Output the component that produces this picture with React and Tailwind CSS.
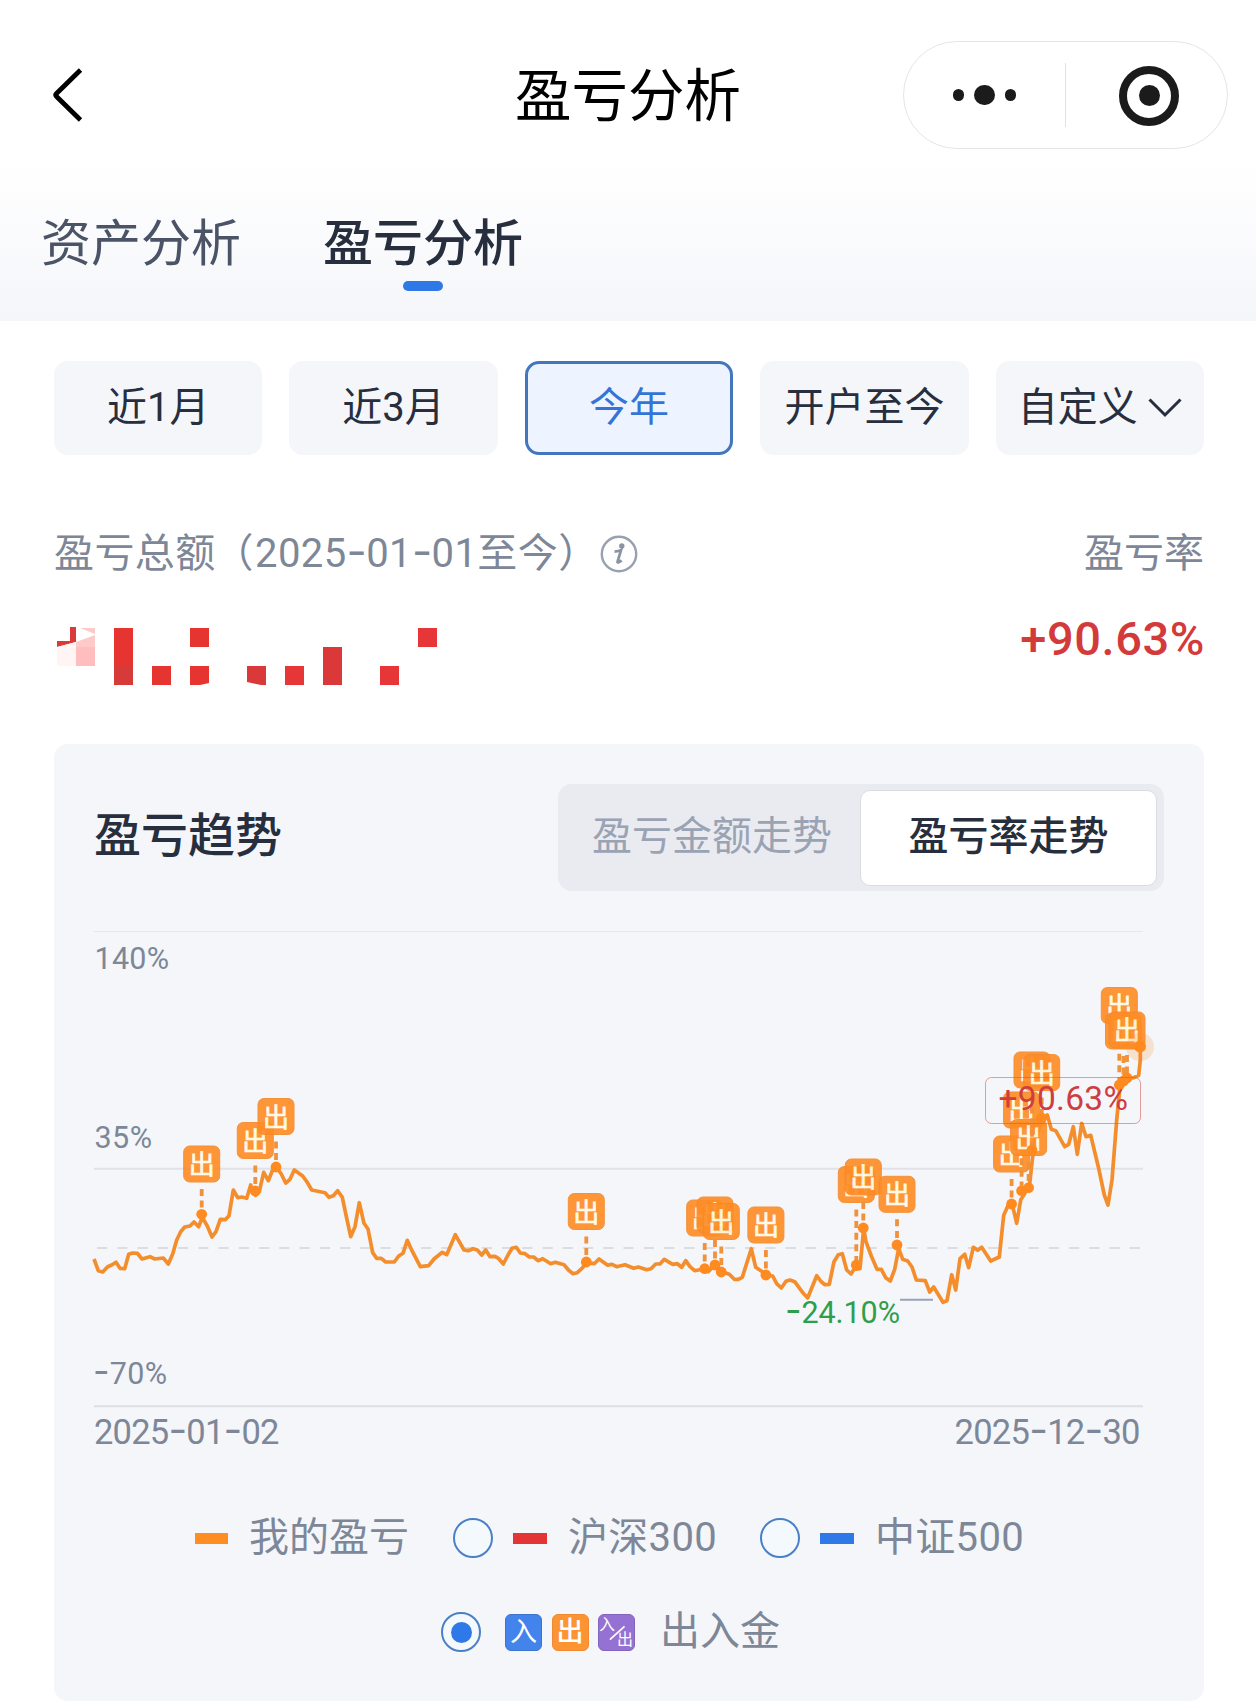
import React, { useState } from 'react'

const trend = `94,1259 98.3,1270.7 102.7,1272 107.7,1266.7 111.7,1265 116,1262.3 120,1268.3 124.7,1268.7 128.7,1254.3 132.7,1253
137.3,1253.3 142,1259 150,1256.7 154.7,1259 163.3,1258 168.3,1264 172.7,1254 176.7,1240 180.7,1231.7 184.7,1227 190,1226
194,1222 198.7,1226.7 202.3,1217.3 207.3,1226 212,1237 216,1231.7 220.3,1219.3 225.3,1219.7 229,1215.7 233.3,1190
237.7,1197.7 241.7,1197 246.7,1198.3 250.7,1185 253.3,1193.3 255.7,1195.3 259.3,1191.7 263.7,1172.3 268.3,1180.7
273.3,1168.3 276,1166.7 281.3,1174 285.7,1183 290,1179.3 294.3,1170 302.7,1176 307.3,1182.3 311.7,1190 325,1192.7
329,1197.3 333.3,1195.7 337.7,1190.7 342.3,1197.3 346,1215 350.7,1236.7 355,1226.7 359.3,1202.7 364,1223.3 368,1229
372.7,1252.7 376.7,1258.3 381.3,1258.3 385.7,1262 394.3,1262 398.7,1256 403,1253.3 407.3,1240.3 412,1250.7 420.3,1266.7
428.7,1265.7 434,1259 442.3,1252.3 446.7,1254.7 455.3,1234.7 464,1250 468.3,1250.7 473,1248.7 477.3,1250 481.7,1255
485.7,1250 490,1256.7 495,1256.3 498.3,1258.3 503.3,1264 508,1255 512,1248.3 516.3,1247.3 520.3,1253 525,1253.7
529.3,1257 533.7,1257 538,1260.7 542.7,1258.7 550.7,1263.7 555.3,1262.3 564,1264.7 568.7,1270.3 573,1273.7 577.3,1272.7
582.3,1268 586.7,1262.7 594.3,1263.7 599,1259 607.7,1265.3 612,1264.3 616.7,1266.7 625,1264.7 633.7,1268.3 638.3,1267
646.7,1269.7 651,1268.7 655.7,1264 660,1264 664.3,1259.3 672.7,1264.3 677.3,1263.7 681.7,1267.3 685.7,1260.7 690,1266.7
694.7,1270.7 703.3,1269 708.3,1271.7 714.3,1265.3 721.7,1271.7 729.3,1274.3 734.3,1279.3 738.3,1279.3 742.3,1277.3
751.3,1248.7 755.7,1267.3 761.7,1271.3 765.7,1275 772.7,1276 776.7,1283.7 781.3,1288 786,1281.3 790,1280 794.7,1281.7
803.3,1293.3 807.7,1298 816.7,1275.7 821,1281.5 825,1284.7 829.3,1284.3 834,1261.7 838.3,1254.7 842.3,1253.7 846.7,1270
851,1274 854,1269.3 860,1268.7 863.7,1228.3 866,1241.7 871.3,1256 877,1269.3 881.3,1269.3 885.7,1277.7 890.3,1281
894.7,1269.3 898.7,1248.3 902.7,1259.3 907.7,1261 912,1267 916.3,1280 925.3,1280.7 929.7,1292 933.7,1287 943,1302.3
947,1300.7 951.7,1274.7 955.7,1290 960,1258.7 964.7,1254.3 968.7,1267.7 973.3,1247.3 977.7,1250.3 981.7,1247.3
990.7,1261 999.3,1257 1003.7,1215.3 1008.3,1205 1012,1203.3 1016.7,1223.3 1020.7,1200 1026.7,1190 1029.3,1187.3
1032.3,1160 1035,1140 1041,1124 1047.3,1115 1051.3,1129.3 1055.7,1130.7 1064.7,1146.7 1068.7,1144.3 1073.3,1126.7
1077.3,1154.3 1081.7,1123.3 1086,1136.7 1090.7,1135.3 1098.3,1166.7 1104.3,1195 1108,1205 1112,1180 1116.7,1120
1120,1086 1126.7,1077.3 1133,1078 1138.7,1075.3 1140.3,1060 1140.3,1046`

// x, badge centre y, point y
const markers = [
  [201.7, 1164, 1214.3],
  [255.3, 1140.5, 1191],
  [276, 1116.5, 1167],
  [586.3, 1211.5, 1262],
  [704.7, 1218, 1268.7],
  [715, 1215, 1265],
  [721.3, 1221.5, 1272],
  [765.9, 1225, 1275],
  [856.3, 1184.5, 1265],
  [863.3, 1177, 1228],
  [897, 1194.3, 1245],
  [1011.6, 1154, 1204],
  [1021.6, 1110, 1190.7],
  [1028.6, 1137.5, 1187.7],
  [1032, 1070, 1150],
  [1041.7, 1072.5, 1118],
  [1119.3, 1005.5, 1085],
  [1123.5, 1031, 1081],
  [1127, 1030, 1078],
]

const ranges = ['近1月', '近3月', '今年', '开户至今', '自定义']

// Hyphens are drawn wider than Roboto's own
const Dashed = ({ text }) =>
  text.split('-').map((part, i) => (
    <React.Fragment key={i}>
      {i > 0 && <span className="font-[Inter] text-[44px] leading-none tracking-[-0.6px]">-</span>}
      {part}
    </React.Fragment>
  ))

const AxisText = ({ x, y, size, width, fill = '#7d8798', children }) => (
  <text x={x} y={y} fontSize={size} textLength={width} lengthAdjust="spacing" fill={fill}>
    {children}
  </text>
)

const Hyphen = () => <tspan fontFamily="Inter" fontSize="1.18em">-</tspan>

const Marker = ({ x, y, dot }) => (
  <g>
    <line x1={x} y1={y + 25} x2={x} y2={dot - 5} stroke="#f0913c" strokeWidth="3.8" strokeDasharray="7 4.6" />
    <circle cx={x} cy={dot} r="5.4" fill="#ff8a20" />
    <g opacity="0.92">
      <rect x={x - 18} y={y - 18} width="36" height="36" rx="6" fill="#ff8d26" stroke="#f28a2c" strokeWidth="1" />
      <text x={x} y={y + 10} textAnchor="middle" fontSize="26" fill="#fffbe6" stroke="#fffbe6" strokeWidth="0.7">出</text>
    </g>
  </g>
)

const TrendChart = () => (
  <svg
    viewBox="54 920 1150 550"
    className="block w-[1150px] h-[550px] font-['Roboto','Noto_Sans_CJK_SC',sans-serif]"
  >
    <line x1="94" x2="1143" y1="931.5" y2="931.5" stroke="#e5e7eb" strokeWidth="1.2" />
    <line x1="94" x2="1143" y1="1168.8" y2="1168.8" stroke="#e0e2e7" strokeWidth="2" />
    <line x1="97" x2="1141" y1="1248" y2="1248" stroke="#dcdde1" strokeWidth="2" strokeDasharray="10.2 10.05" />
    <line x1="94" x2="1143" y1="1406.3" y2="1406.3" stroke="#dddfe4" strokeWidth="2" />

    <AxisText x="94.5" y="969" size="30.5" width="74.5">140%</AxisText>
    <AxisText x="94.5" y="1148" size="30.5" width="57.5">35%</AxisText>
    <AxisText x="93" y="1384" size="30.5" width="74">
      <Hyphen />70%
    </AxisText>
    <AxisText x="94" y="1444" size="34.5" width="185.5">
      2025<Hyphen />01<Hyphen />02
    </AxisText>
    <AxisText x="954.5" y="1444" size="34.5" width="186">
      2025<Hyphen />12<Hyphen />30
    </AxisText>

    <polyline points={trend} fill="none" stroke="#f48d2c" strokeWidth="3.7" strokeLinejoin="round" />
    {markers.map(([x, y, dot], i) => (
      <Marker key={i} x={x} y={y} dot={dot} />
    ))}

    {/* lowest point */}
    <AxisText x="785" y="1322.7" size="30.5" width="115" fill="#2f9e4a">
      <Hyphen />24.10%
    </AxisText>
    <line x1="900" x2="933" y1="1299.8" y2="1299.8" stroke="#98a3b6" strokeWidth="2" />

    {/* latest point */}
    <circle cx="1140" cy="1047" r="14" fill="#ff8a20" opacity="0.2" />
    <circle cx="1140" cy="1046.5" r="6" fill="#ff8a20" />
    <rect x="985.5" y="1077.5" width="155" height="46" rx="6" fill="none" stroke="#d8504f" strokeOpacity="0.55" />
    <AxisText x="998.5" y="1109.6" size="33.5" width="129.5" fill="#cf3d3f">+90.63%</AxisText>
  </svg>
)

const MaskedAmount = () => (
  <svg viewBox="54 624 400 64" className="block w-[400px] h-[64px]">
    <path d="M57 641h13v-14h6v15l-19 5z" fill="#d93a3a" />
    <path d="M76 642l19-7v12H76zM80 628h15v6z" fill="#fdc9c9" />
    <path d="M76 647h19v19H76z" fill="#ffbdbe" />
    <path d="M57 647l19-5v24H57z" fill="#fff5f5" />
    <path d="M114 628h19v57h-19zM152 666h19v19h-19zM190 628h19v19h-19zM190 666h19v17l-9 2h-10z" fill="#e63431" />
    <path d="M285 666h19v19h-19zM380 666h19v19h-19zM418 628h19v19h-19z" fill="#e63637" />
    <path d="M247 666h19v19h-5l-14-3zM323 647h19v38h-19z" fill="#db3939" />
    <path d="M114 666h19v19h-19z" fill="#d63b39" />
  </svg>
)

const Radio = ({ checked, onClick }) => (
  <button
    onClick={onClick}
    className="size-[40px] shrink-0 rounded-full border-2 border-[#4a80c6] bg-[#f4f9fe] flex items-center justify-center"
  >
    {checked && <span className="size-[21px] rounded-full bg-[#2f78e8]" />}
  </button>
)

export default function App() {
  const [range, setRange] = useState('今年')
  const [legend, setLegend] = useState({ hs: false, zz: false, flow: true })
  const toggle = (key) => setLegend(prev => ({ ...prev, [key]: !prev[key] }))

  return (
    <div className="w-[1256px] h-[1703px] overflow-hidden bg-white text-[#272e3d] font-['Roboto','Noto_Sans_CJK_SC',sans-serif]">
      {/* Header */}
      <div className="h-[321px] bg-linear-to-b from-white from-50% to-[#f5f6fa]">
        <div className="h-[190px] pt-[41px] pl-[53px] pr-[28px] grid grid-cols-[325px_1fr_325px] items-start">
          <svg viewBox="0 0 30 54" className="w-[30px] h-[54px] mt-[27px]">
            <path d="M27.5 2L3.5 25.5Q2 27 3.5 28.5L27.5 52" fill="none" stroke="#000" strokeWidth="4.8" />
          </svg>
          <h1 className="h-[108px] flex items-center justify-center text-[56.5px] leading-none text-black -ml-[25px] pt-[5px] whitespace-nowrap">盈亏分析</h1>
          <div className="w-[325px] h-[108px] rounded-full border border-[#e5e5e5] bg-white flex items-center">
            <div className="w-[161px] flex justify-center items-center gap-[10px]">
              <span className="size-[11.5px] rounded-full bg-[#1b1b1b]" />
              <span className="size-[20.5px] rounded-full bg-[#1b1b1b]" />
              <span className="size-[11.5px] rounded-full bg-[#1b1b1b]" />
            </div>
            <div className="w-px h-[64px] bg-[#e2e2e2]" />
            <div className="flex-1 flex justify-center pl-[5px] pt-px">
              <div className="size-[60px] rounded-full border-[8px] border-[#1b1b1b] flex items-center justify-center">
                <span className="size-[21px] rounded-full bg-[#1b1b1b]" />
              </div>
            </div>
          </div>
        </div>
        <div className="pl-[41px] pt-[29px] flex gap-[82px] text-[50px] leading-[50px]">
          <button className="h-[75px] flex items-start text-[#4b5466]">资产分析</button>
          <button className="h-[75px] flex flex-col items-center font-medium">
            盈亏分析
            <span className="mt-[12px] w-[40px] h-[10px] rounded-full bg-[#2f78e8]" />
          </button>
        </div>
      </div>

      {/* Range filter */}
      <div className="mx-[54px] w-[1150px] mt-[40px] grid grid-cols-5 gap-x-[27px]">
        {ranges.map(item => (
          <button
            key={item}
            onClick={() => setRange(item)}
            className={`h-[94px] pb-px rounded-[14px] flex items-center justify-center text-[40px] leading-none whitespace-nowrap ${
              item === range
                ? 'bg-[#eef4ff] border-[3px] border-[#4377bd] text-[#3574d6]'
                : 'bg-[#f4f6fa]'
            }`}
          >
            {item}
            {item === '自定义' && (
              <svg viewBox="0 0 34 20" className="w-[34px] h-[20px] ml-[10px] mt-px">
                <path d="M1.5 1.5L17 17L32.5 1.5" fill="none" stroke="#272e3d" strokeWidth="3" />
              </svg>
            )}
          </button>
        ))}
      </div>

      {/* Summary */}
      <div className="mx-[54px] w-[1150px] mt-[79px] flex justify-between text-[40px] leading-[40px] text-[#7d8798]">
        <div className="h-[40px] flex items-center whitespace-nowrap">
          <span className="-mt-[5px] tracking-[0.4px]">盈亏总额<span className="-ml-[2px] mr-px">（</span><Dashed text="2025-01-01" />至今<span className="mr-px">）</span></span>
          <svg viewBox="0 0 38 38" className="w-[38px] h-[38px]">
            <circle cx="19" cy="19" r="17.2" fill="none" stroke="#98a1b0" strokeWidth="2.4" />
            <circle cx="21.8" cy="11" r="2.7" fill="#8b94a4" />
            <path d="M14.5 16.6q4.5-.3 6.5-1.5l-3.4 11.4q-.5 2.4 4-1.2" fill="none" stroke="#8b94a4" strokeWidth="2.8" />
          </svg>
        </div>
        <span>盈亏率</span>
      </div>
      <div className="mx-[54px] w-[1150px] mt-[50px] h-[64px] flex justify-between">
        <MaskedAmount />
        <span className="text-[47px] leading-[29px] font-medium tracking-[0.6px] -mr-[1px] text-[#d33b3b]">+90.63%</span>
      </div>

      {/* Trend card */}
      <div className="mx-[54px] w-[1150px] mt-[56px] h-[957px] pt-[40px] rounded-[14px] bg-[#f4f6fa]">
        <div className="pl-[40px] pr-[40px] h-[107px] flex items-center justify-between">
          <h2 className="text-[47px] leading-none font-medium pb-[4px]">盈亏趋势</h2>
          <div className="w-[606px] h-[107px] rounded-[14px] bg-[#e9ebf0] flex items-center justify-between pl-[34px] pr-[7px] text-[40px] leading-none">
            <button className="pb-[2px] text-[#9aa3b4]">盈亏金额走势</button>
            <button className="w-[297px] h-[96px] pb-[2px] rounded-[10px] bg-white border border-[#d9dce2] font-medium">盈亏率走势</button>
          </div>
        </div>
        <div className="mt-[29px]">
          <TrendChart />
        </div>
        <div className="mt-[43px] h-[50px] pl-[141px] flex items-center text-[40px] leading-none text-[#7d8798] whitespace-nowrap">
          <span className="w-[33px] h-[11px] bg-[#ff8d24]" />
          <span className="w-[160px] ml-[21px] mr-[44px]">我的盈亏</span>
          <Radio checked={legend.hs} onClick={() => toggle('hs')} />
          <span className="w-[34px] h-[11px] ml-[20px] bg-[#e33535]" />
          <span className="w-[148px] ml-[21px] mr-[44px] tracking-[0.3px]">沪深300</span>
          <Radio checked={legend.zz} onClick={() => toggle('zz')} />
          <span className="w-[34px] h-[11px] ml-[20px] bg-[#2f78e8]" />
          <span className="ml-[21px] tracking-[0.3px]">中证500</span>
        </div>
        <div className="mt-[44px] h-[50px] pl-[387px] flex items-center text-[40px] leading-none text-[#7d8798] whitespace-nowrap">
          <Radio checked={legend.flow} onClick={() => toggle('flow')} />
          <div className="ml-[24px] flex gap-[9.5px] text-[27px] leading-none text-white">
            <span className="size-[37px] rounded-[6px] border border-[#3f74cc] bg-[#4383ec] flex items-center justify-center">入</span>
            <span className="size-[37px] rounded-[6px] border border-[#ef8a33] bg-[#fd9434] flex items-center justify-center font-medium">出</span>
            <span className="relative size-[37px] rounded-[6px] border border-[#8263bd] bg-[#9571d3] text-[16px]">
              <span className="absolute left-0 top-[2px]">入</span>
              <svg viewBox="0 0 37 37" className="absolute inset-0 size-[35px]">
                <path d="M11.5 26L27 12" stroke="#fff" strokeWidth="1.8" />
              </svg>
              <span className="absolute right-[1px] bottom-[2px]">出</span>
            </span>
          </div>
          <span className="ml-[25px]">出入金</span>
        </div>
      </div>
    </div>
  )
}
